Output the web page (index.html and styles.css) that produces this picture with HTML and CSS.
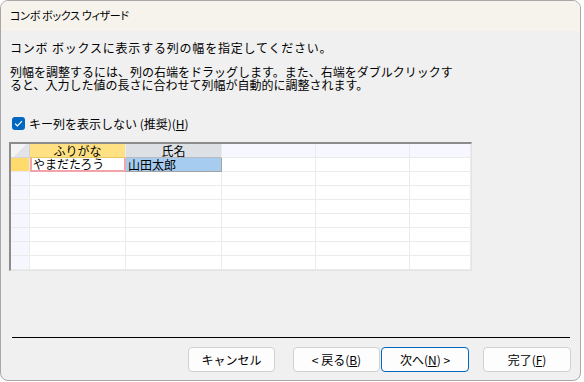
FILE: index.html
```html
<!DOCTYPE html>
<html lang="ja">
<head>
    <meta charset="UTF-8">
    <title>コンボ ボックス ウィザード</title>
    <link rel="stylesheet" href="styles.css">
</head>
<body>
    <div class="dialog">
        <div class="titlebar">コンボ ボックス ウィザード</div>

        <div class="content">
            <p class="lead">コンボ ボックスに表示する列の幅を指定してください。</p>
            <p class="hint">列幅を調整するには、列の右端をドラッグします。また、右端をダブルクリックす<br>ると、入力した値の長さに合わせて列幅が自動的に調整されます。</p>

            <label class="check-row">
                <span class="checkbox">
                    <svg width="9" height="7" viewBox="0 0 9 7"><path d="M1 3.6 L3.4 5.8 L8 1.2" fill="none" stroke="#fff" stroke-width="1.2"/></svg>
                </span>
                <span>キー列を表示しない (推奨)(<u>H</u>)</span>
            </label>

            <div class="grid">
                <!-- header -->
                <div class="cell corner"></div>
                <div class="cell hd hd-active">ふりがな</div>
                <div class="cell hd hd-sel">氏名</div>
                <div class="cell hd"></div>
                <div class="cell hd"></div>
                <div class="cell hd"></div>
                <!-- row 1 -->
                <div class="cell rh rh-active"></div>
                <div class="cell editing">やまだたろう</div>
                <div class="cell selected">山田太郎</div>
                <div class="cell"></div>
                <div class="cell"></div>
                <div class="cell"></div>
                <!-- empty rows -->
                <div class="cell rh"></div><div class="cell"></div><div class="cell"></div><div class="cell"></div><div class="cell"></div><div class="cell"></div>
                <div class="cell rh"></div><div class="cell"></div><div class="cell"></div><div class="cell"></div><div class="cell"></div><div class="cell"></div>
                <div class="cell rh"></div><div class="cell"></div><div class="cell"></div><div class="cell"></div><div class="cell"></div><div class="cell"></div>
                <div class="cell rh"></div><div class="cell"></div><div class="cell"></div><div class="cell"></div><div class="cell"></div><div class="cell"></div>
                <div class="cell rh"></div><div class="cell"></div><div class="cell"></div><div class="cell"></div><div class="cell"></div><div class="cell"></div>
                <div class="cell rh"></div><div class="cell"></div><div class="cell"></div><div class="cell"></div><div class="cell"></div><div class="cell"></div>
                <div class="cell rh"></div><div class="cell"></div><div class="cell"></div><div class="cell"></div><div class="cell"></div><div class="cell"></div>
            </div>

            <div class="separator"></div>

            <div class="buttons">
                <button class="btn btn-cancel">キャンセル</button>
                <button class="btn btn-back">&lt; 戻る(<u>B</u>)</button>
                <button class="btn btn-next">次へ(<u>N</u>) &gt;</button>
                <button class="btn btn-finish">完了(<u>F</u>)</button>
            </div>
        </div>
    </div>
</body>
</html>
```

FILE: styles.css
```css
* {
    margin: 0;
    padding: 0;
    box-sizing: border-box;
}

body {
    background: #ffffff;
    font-family: "Noto Sans CJK JP", "Noto Sans", sans-serif;
    font-size: 12px;
    color: #000;
}

.dialog {
    width: 581px;
    height: 381px;
    border: 1px solid #a8a8a8;
    border-radius: 8px;
    background: #f0f0f0;
    overflow: hidden;
}

.titlebar {
    height: 30px;
    line-height: 29px;
    padding-left: 9px;
    background: #f6f3ec;
    font-size: 11px;
    letter-spacing: -0.3px;
    font-feature-settings: "palt";
}

.content {
    padding: 0 9px 0 8px;
}

.lead {
    margin-top: 10px;
    padding-left: 1px;
    line-height: 13px;
    letter-spacing: 0.8px;
}

.hint {
    margin-top: 11px;
    padding-left: 1px;
    line-height: 13px;
}

.check-row {
    display: flex;
    align-items: center;
    gap: 4px;
    margin-top: 25px;
    padding-left: 3px;
    height: 14px;
}

.checkbox {
    width: 13px;
    height: 13px;
    border-radius: 3px;
    background: #0067c0;
    display: flex;
    align-items: center;
    justify-content: center;
}

.check-row u,
.btn u {
    text-underline-offset: 1px;
}

.grid {
    margin-top: 12px;
    width: 463px;
    display: grid;
    grid-template-columns: 19px 96px 96px 94px 94px 61px;
    border-top: 2px solid #8c8c8c;
    border-left: 2px solid #8c8c8c;
    border-right: 1px solid #e4e4e4;
    border-bottom: 1px solid #e4e4e4;
    background: #fff;
}

.cell {
    height: 14px;
    border-right: 1px solid #ebebeb;
    border-bottom: 1px solid #ebebeb;
    line-height: 13px;
    padding-left: 2px;
    white-space: nowrap;
}

.corner {
    background: linear-gradient(135deg, #f4f4f4 50%, #e2e4ea 50%);
    border-right-color: #d4d4d4;
    border-bottom-color: #d4d4d4;
}

.hd {
    background: #f6f7ff;
    text-align: center;
    padding-left: 0;
}

.hd-active {
    background: #ffe183;
    border-bottom-color: #e8c860;
}

.hd-sel {
    background: #dde1e6;
    border-bottom-color: #b8bcc2;
}

.rh {
    background: #f6f6ff;
}

.rh-active {
    background: #fedb6c;
}

.editing {
    border: 2px solid #f5a3ab;
    border-top: 0;
    padding-left: 1px;
    line-height: 12px;
}

.selected {
    background: #a6cdf0;
    border-right-color: #a4a4a4;
    border-bottom-color: #a4a4a4;
}

.separator {
    margin: 66px 0 0 3px;
    width: 558px;
    height: 1px;
    background: #000;
}

.buttons {
    display: flex;
    margin-top: 9px;
    padding-left: 179px;
}

.btn {
    height: 25px;
    width: 87px;
    border: 1px solid #d0d0d0;
    border-radius: 4px;
    background: #fdfdfd;
    font-family: inherit;
    font-size: 12px;
    color: #000;
}

.btn-back {
    margin-left: 18px;
}

.btn-next {
    margin-left: 1px;
    width: 88px;
    border-color: #0067c0;
}

.btn-finish {
    margin-left: 14px;
    width: 88px;
}
```
